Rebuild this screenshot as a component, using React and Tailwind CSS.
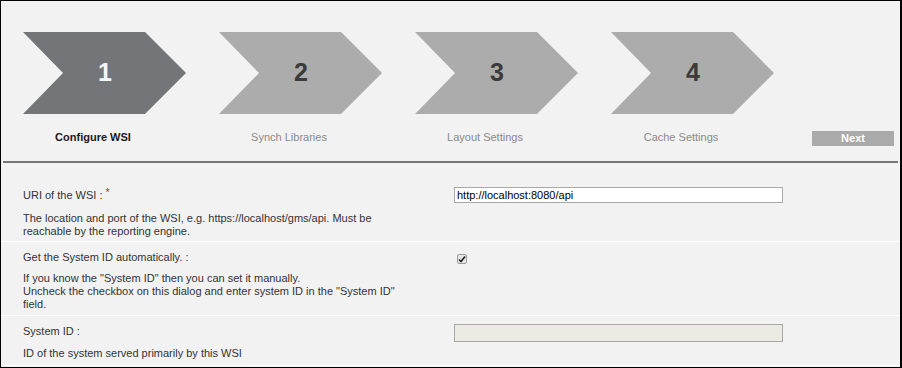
import React from 'react';

const steps = [
  { n: '1', label: 'Configure WSI', active: true },
  { n: '2', label: 'Synch Libraries' },
  { n: '3', label: 'Layout Settings' },
  { n: '4', label: 'Cache Settings' },
];

const Chevron = ({ n, active }) => (
  <div className="relative w-[163px] h-[82px]">
    <svg width="163" height="82" viewBox="0 0 163 82" className="absolute inset-0">
      <polygon points="0,0 122,0 163,41 122,82 0,82 40,41" fill={active ? '#737578' : '#acacac'} />
    </svg>
    <div className={`relative flex h-full items-center justify-center pl-[1px] text-[25px] font-bold ${active ? 'text-[#f7f7f7]' : 'text-[#3b3b3b]'}`}>
      {n}
    </div>
  </div>
);

const Row = ({ children, control, pt, pb }) => (
  <div className={`grid grid-cols-[431px_1fr] border-b border-white pl-[22px] ${pt} ${pb}`}>
    <div className="text-[11px] leading-[13px] text-[#333]">{children}</div>
    <div>{control}</div>
  </div>
);

export default function App() {
  return (
    <div
      className="w-[902px] h-[368px] overflow-hidden border border-black border-r-2 bg-[#f2f2f2]"
      style={{ fontFamily: '"Liberation Sans", Arial, sans-serif' }}
    >
      {/* Wizard steps */}
      <div className="flex items-end pl-[22px] pt-[31px]">
        {steps.map((s, i) => (
          <div key={i} className={`flex w-[163px] flex-col ${i > 0 ? 'ml-[33px]' : ''}`}>
            <Chevron n={s.n} active={s.active} />
            <div
              className={`mt-[17px] w-[140px] text-center text-[11px] leading-[13px] whitespace-nowrap ${
                s.active ? 'font-bold text-[#1a1a1a]' : 'text-[#8a8a8a]'
              }`}
            >
              {s.label}
            </div>
          </div>
        ))}
        <button className="ml-[38px] mb-[-2px] h-[15px] w-[82px] bg-[#aaaaaa] text-[11px] font-bold leading-[15px] text-white">
          Next
        </button>
      </div>

      <div className="mx-[2px] mt-[17px] h-[2px] bg-[#767676]" />

      {/* Settings rows */}
      <Row
        pt="pt-[26px]"
        pb="pb-[3px]"
        control={
          <div className="mt-[-2px] h-[16px] w-[329px] border border-[#a9a9a9] bg-white pl-[2px] text-[11px] leading-[14px] text-black">
            http://localhost:8080/api
          </div>
        }
      >
        <div>
          URI of the WSI : <span className="relative top-[-3px] text-[#e02020]">*</span>
        </div>
        <div className="mt-[10px]">
          The location and port of the WSI, e.g. https://localhost/gms/api. Must be
          <br />
          reachable by the reporting engine.
        </div>
      </Row>

      <Row
        pt="pt-[9px]"
        pb="pb-[4px]"
        control={
          <div className="ml-[3px] mt-[3px] flex h-[10px] w-[10px] items-center justify-center rounded-[2px] border border-[#9c9c9c] bg-[#e6e6e6]">
            <svg width="8" height="8" viewBox="0 0 8 8">
              <path d="M1 4.5 L3 6.5 L7 1.5" fill="none" stroke="#222" strokeWidth="1.6" />
            </svg>
          </div>
        }
      >
        <div>Get the System ID automatically. :</div>
        <div className="mt-[8px]">
          If you know the "System ID" then you can set it manually.
          <br />
          Uncheck the checkbox on this dialog and enter system ID in the "System ID"
          <br />
          field.
        </div>
      </Row>

      <Row
        pt="pt-[9px]"
        pb="pb-[5px]"
        control={<div className="mt-[-1px] h-[18px] w-[329px] border border-[#a9a9a9] bg-[#ebebe4]" />}
      >
        <div>System ID :</div>
        <div className="mt-[9px]">ID of the system served primarily by this WSI</div>
      </Row>
    </div>
  );
}
